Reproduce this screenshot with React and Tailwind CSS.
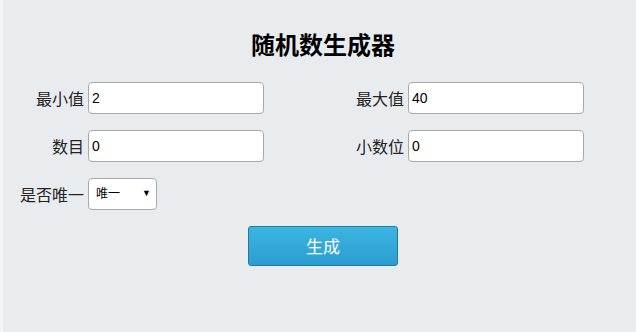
import React from "react";

const cjk = { fontFamily: '"Noto Sans CJK SC", "Noto Sans", sans-serif' };

function Field({ label, value }) {
  return (
    <div className="flex items-center w-[320px] shrink-0">
      <label className="w-[81px] shrink-0 text-right text-[16px] text-[#222] leading-none" style={cjk}>
        {label}
      </label>
      <input
        defaultValue={value}
        className="ml-[4px] w-[176px] shrink-0 h-[32px] bg-white border border-[#a9a9a9] rounded-[4px] pl-[3px] text-[14px] text-black outline-none"
        style={{ fontFamily: '"Liberation Sans", Arial, sans-serif' }}
      />
    </div>
  );
}

export default function App() {
  return (
    <div className="w-[636px] h-[332px] bg-[#f4f5f7] pl-[3px] overflow-hidden">
      <div className="w-[640px] h-full bg-[#e9ecef] flex flex-col">
        <h1
          className="mt-[28px] h-[32px] leading-[32px] text-center text-[24px] font-bold text-black"
          style={cjk}
        >
          随机数生成器
        </h1>
        <div className="mt-[22px] flex flex-col gap-[16px]">
          <div className="flex">
            <Field label="最小值" value="2" />
            <Field label="最大值" value="40" />
          </div>
          <div className="flex">
            <Field label="数目" value="0" />
            <Field label="小数位" value="0" />
          </div>
          <div className="flex items-center">
            <label className="w-[81px] text-right text-[16px] text-[#222] leading-none" style={cjk}>
              是否唯一
            </label>
            <div className="relative ml-[4px] w-[69px] h-[32px]">
              <select
                className="appearance-none w-full h-full bg-white border border-[#a9a9a9] rounded-[4px] pl-[7px] pb-[2px] text-[12px] text-black outline-none"
                style={cjk}
                defaultValue="unique"
              >
                <option value="unique">唯一</option>
                <option value="repeat">可重复</option>
              </select>
              <span className="pointer-events-none absolute right-[6px] top-[10px] text-[9px] text-black leading-none">
                ▼
              </span>
            </div>
          </div>
        </div>
        <div className="mt-[16px] flex justify-center">
          <button
            className="w-[150px] h-[40px] rounded-[3px] border border-[#1f7aa3] bg-gradient-to-b from-[#3cb5e2] to-[#2a9ed0] text-white text-[17px]"
            style={cjk}
          >
            生成
          </button>
        </div>
      </div>
    </div>
  );
}
